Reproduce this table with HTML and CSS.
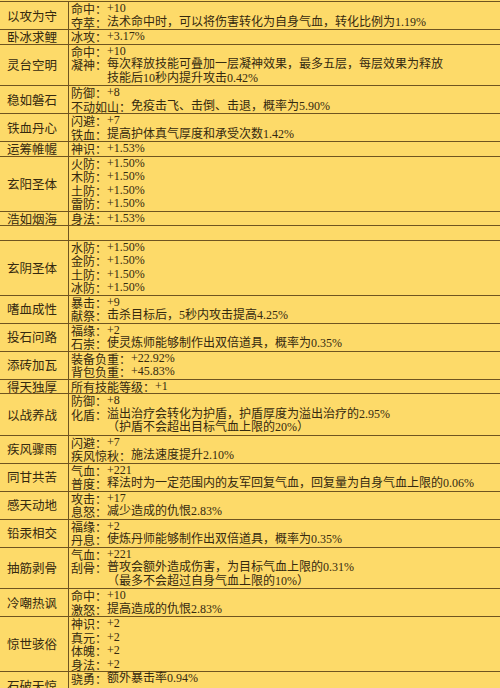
FILE: index.html
```html
<!DOCTYPE html>
<html lang="zh">
<head>
<meta charset="utf-8">
<link rel="stylesheet" href="styles.css">
</head>
<body>
<div class="table">
  <div class="row"><div class="name">以攻为守</div><div class="attrs">
    <div class="e"><span class="k">命中：</span><span class="v">+10</span></div>
    <div class="e"><span class="k">夺萃：</span><span class="v">法术命中时，可以将伤害转化为自身气血，转化比例为1.19%</span></div>
  </div></div>
  <div class="row"><div class="name">卧冰求鲤</div><div class="attrs">
    <div class="e"><span class="k">冰攻：</span><span class="v">+3.17%</span></div>
  </div></div>
  <div class="row"><div class="name">灵台空明</div><div class="attrs">
    <div class="e"><span class="k">命中：</span><span class="v">+10</span></div>
    <div class="e"><span class="k">凝神：</span><span class="v">每次释放技能可叠加一层凝神效果，最多五层，每层效果为释放<br>技能后10秒内提升攻击0.42%</span></div>
  </div></div>
  <div class="row"><div class="name">稳如磐石</div><div class="attrs">
    <div class="e"><span class="k">防御：</span><span class="v">+8</span></div>
    <div class="e"><span class="k">不动如山：</span><span class="v">免疫击飞、击倒、击退，概率为5.90%</span></div>
  </div></div>
  <div class="row"><div class="name">铁血丹心</div><div class="attrs">
    <div class="e"><span class="k">闪避：</span><span class="v">+7</span></div>
    <div class="e"><span class="k">铁血：</span><span class="v">提高护体真气厚度和承受次数1.42%</span></div>
  </div></div>
  <div class="row"><div class="name">运筹帷幄</div><div class="attrs">
    <div class="e"><span class="k">神识：</span><span class="v">+1.53%</span></div>
  </div></div>
  <div class="row"><div class="name">玄阳圣体</div><div class="attrs">
    <div class="e"><span class="k">火防：</span><span class="v">+1.50%</span></div>
    <div class="e"><span class="k">木防：</span><span class="v">+1.50%</span></div>
    <div class="e"><span class="k">土防：</span><span class="v">+1.50%</span></div>
    <div class="e"><span class="k">雷防：</span><span class="v">+1.50%</span></div>
  </div></div>
  <div class="row"><div class="name">浩如烟海</div><div class="attrs">
    <div class="e"><span class="k">身法：</span><span class="v">+1.53%</span></div>
  </div></div>
  <div class="row"><div class="name"></div><div class="attrs"><div class="e">&nbsp;</div></div></div>
  <div class="row"><div class="name">玄阴圣体</div><div class="attrs">
    <div class="e"><span class="k">水防：</span><span class="v">+1.50%</span></div>
    <div class="e"><span class="k">金防：</span><span class="v">+1.50%</span></div>
    <div class="e"><span class="k">土防：</span><span class="v">+1.50%</span></div>
    <div class="e"><span class="k">冰防：</span><span class="v">+1.50%</span></div>
  </div></div>
  <div class="row"><div class="name">嗜血成性</div><div class="attrs">
    <div class="e"><span class="k">暴击：</span><span class="v">+9</span></div>
    <div class="e"><span class="k">献祭：</span><span class="v">击杀目标后，5秒内攻击提高4.25%</span></div>
  </div></div>
  <div class="row"><div class="name">投石问路</div><div class="attrs">
    <div class="e"><span class="k">福缘：</span><span class="v">+2</span></div>
    <div class="e"><span class="k">石崇：</span><span class="v">使灵炼师能够制作出双倍道具，概率为0.35%</span></div>
  </div></div>
  <div class="row"><div class="name">添砖加瓦</div><div class="attrs">
    <div class="e"><span class="k">装备负重：</span><span class="v">+22.92%</span></div>
    <div class="e"><span class="k">背包负重：</span><span class="v">+45.83%</span></div>
  </div></div>
  <div class="row"><div class="name">得天独厚</div><div class="attrs">
    <div class="e"><span class="k">所有技能等级：</span><span class="v">+1</span></div>
  </div></div>
  <div class="row"><div class="name">以战养战</div><div class="attrs">
    <div class="e"><span class="k">防御：</span><span class="v">+8</span></div>
    <div class="e"><span class="k">化盾：</span><span class="v">溢出治疗会转化为护盾，护盾厚度为溢出治疗的2.95%<br>（护盾不会超出目标气血上限的20%）</span></div>
  </div></div>
  <div class="row"><div class="name">疾风骤雨</div><div class="attrs">
    <div class="e"><span class="k">闪避：</span><span class="v">+7</span></div>
    <div class="e"><span class="k">疾风惊秋：</span><span class="v">施法速度提升2.10%</span></div>
  </div></div>
  <div class="row"><div class="name">同甘共苦</div><div class="attrs">
    <div class="e"><span class="k">气血：</span><span class="v">+221</span></div>
    <div class="e"><span class="k">普度：</span><span class="v">释法时为一定范围内的友军回复气血，回复量为自身气血上限的0.06%</span></div>
  </div></div>
  <div class="row"><div class="name">感天动地</div><div class="attrs">
    <div class="e"><span class="k">攻击：</span><span class="v">+17</span></div>
    <div class="e"><span class="k">息怒：</span><span class="v">减少造成的仇恨2.83%</span></div>
  </div></div>
  <div class="row"><div class="name">铅汞相交</div><div class="attrs">
    <div class="e"><span class="k">福缘：</span><span class="v">+2</span></div>
    <div class="e"><span class="k">丹息：</span><span class="v">使炼丹师能够制作出双倍道具，概率为0.35%</span></div>
  </div></div>
  <div class="row"><div class="name">抽筋剥骨</div><div class="attrs">
    <div class="e"><span class="k">气血：</span><span class="v">+221</span></div>
    <div class="e"><span class="k">刮骨：</span><span class="v">普攻会额外造成伤害，为目标气血上限的0.31%<br>（最多不会超过自身气血上限的10%）</span></div>
  </div></div>
  <div class="row"><div class="name">冷嘲热讽</div><div class="attrs">
    <div class="e"><span class="k">命中：</span><span class="v">+10</span></div>
    <div class="e"><span class="k">激怒：</span><span class="v">提高造成的仇恨2.83%</span></div>
  </div></div>
  <div class="row"><div class="name">惊世骇俗</div><div class="attrs">
    <div class="e"><span class="k">神识：</span><span class="v">+2</span></div>
    <div class="e"><span class="k">真元：</span><span class="v">+2</span></div>
    <div class="e"><span class="k">体魄：</span><span class="v">+2</span></div>
    <div class="e"><span class="k">身法：</span><span class="v">+2</span></div>
  </div></div>
  <div class="row"><div class="name">石破天惊</div><div class="attrs">
    <div class="e"><span class="k">骁勇：</span><span class="v">额外暴击率0.94%</span></div>
    <div class="e"><span class="k">&nbsp;</span></div>
  </div></div>
</div>
</body>
</html>
```
FILE: styles.css
```css
html, body {
  margin: 0;
  padding: 0;
  background: #fdda69;
}
body {
  width: 500px;
  height: 688px;
  overflow: hidden;
  font-family: "Liberation Serif", "Noto Sans CJK SC", serif;
  font-size: 12px;
  color: #35290f;
}
.table {
  border-top: 1px solid #6f5420;
  margin-top: 1px;
}
.row {
  display: grid;
  grid-template-columns: 69px 1fr;
  border-bottom: 1px solid #6f5420;
}
.name {
  border-right: 1px solid #6f5420;
  display: flex;
  align-items: center;
  padding-left: 7px;
  font-family: "Noto Sans CJK SC", sans-serif;
  font-size: 12.5px;
  line-height: 13.5px;
}
.attrs {
  padding-left: 2px;
}
.e {
  display: flex;
  line-height: 13.5px;
}
.k {
  flex: none;
  font-family: "Noto Sans CJK SC", sans-serif;
}
.v {
  flex: 1;
}
```
